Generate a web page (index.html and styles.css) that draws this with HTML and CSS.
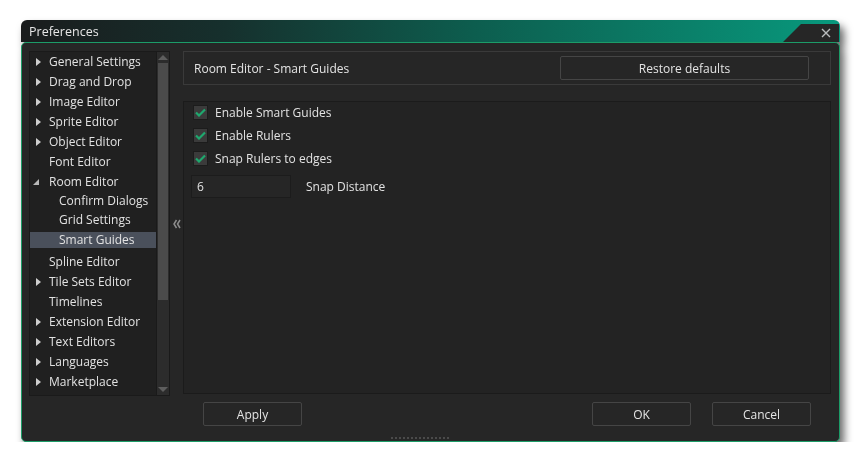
FILE: index.html
```html
<!DOCTYPE html>
<html>
<head>
<meta charset="utf-8">
<link rel="stylesheet" href="styles.css">
</head>
<body>
<div class="window">
  <div class="titlebar">
    <span class="title">Preferences</span>
    <div class="notch"></div>
    <svg class="close" width="10" height="10" viewBox="0 0 10 10"><path d="M1 1 L9 9 M9 1 L1 9" stroke="#b9bcbd" stroke-width="1.4" fill="none"/></svg>
  </div>
  <div class="frame">
    <div class="main">
      <div class="tree">
        <ul class="items">
          <li class="item"><span class="arr"></span>General Settings</li>
          <li class="item"><span class="arr"></span>Drag and Drop</li>
          <li class="item"><span class="arr"></span>Image Editor</li>
          <li class="item"><span class="arr"></span>Sprite Editor</li>
          <li class="item"><span class="arr"></span>Object Editor</li>
          <li class="item">Font Editor</li>
          <li class="item"><span class="arr open"></span>Room Editor</li>
          <li class="item child short">Confirm Dialogs</li>
          <li class="item child">Grid Settings</li>
          <li class="item child sel">Smart Guides</li>
          <li class="item tall">Spline Editor</li>
          <li class="item"><span class="arr"></span>Tile Sets Editor</li>
          <li class="item">Timelines</li>
          <li class="item"><span class="arr"></span>Extension Editor</li>
          <li class="item"><span class="arr"></span>Text Editors</li>
          <li class="item"><span class="arr"></span>Languages</li>
          <li class="item"><span class="arr"></span>Marketplace</li>
        </ul>
        <div class="scroll">
          <div class="sbtn up"></div>
          <div class="track"><div class="thumb"></div></div>
          <div class="sbtn down"></div>
        </div>
      </div>
      <div class="splitter"><svg width="8" height="10" viewBox="0 0 8 10"><path d="M3.5 1 L1 5 L3.5 9 M7 1 L4.5 5 L7 9" stroke="#8c8c8c" stroke-width="1.5" fill="none"/></svg></div>
      <div class="right">
        <div class="header">
          <span class="htitle">Room Editor - Smart Guides</span>
          <button class="btn restore">Restore defaults</button>
        </div>
        <div class="panel">
          <label class="check"><span class="box"><svg width="11" height="9" viewBox="0 0 11 9"><path d="M1 4.5 L4 7.5 L10 1.5" stroke="#1fa86e" stroke-width="2.2" fill="none"/></svg></span>Enable Smart Guides</label>
          <label class="check"><span class="box"><svg width="11" height="9" viewBox="0 0 11 9"><path d="M1 4.5 L4 7.5 L10 1.5" stroke="#1fa86e" stroke-width="2.2" fill="none"/></svg></span>Enable Rulers</label>
          <label class="check"><span class="box"><svg width="11" height="9" viewBox="0 0 11 9"><path d="M1 4.5 L4 7.5 L10 1.5" stroke="#1fa86e" stroke-width="2.2" fill="none"/></svg></span>Snap Rulers to edges</label>
          <div class="field"><span class="input">6</span><span class="flabel">Snap Distance</span></div>
        </div>
      </div>
    </div>
    <div class="bottom">
      <button class="btn">Apply</button>
      <div class="spacer"></div>
      <button class="btn">OK</button>
      <button class="btn">Cancel</button>
    </div>
    <div class="grip"></div>
  </div>
</div>
</body>
</html>
```
FILE: styles.css
```css
*, *::before, *::after { box-sizing: border-box; }
html, body { margin: 0; padding: 0; background: #ffffff; }
body { font-family: "Open Sans", "DejaVu Sans", sans-serif; font-size: 12px; color: #e2e2e2; }
.window { width: 819px; margin: 20px 0 0 21px; filter: drop-shadow(4px 6px 4px rgba(0,0,0,0.6)); }
.titlebar { position: relative; height: 22px; border-radius: 6px 6px 0 0; background: linear-gradient(90deg, #1a1c1d 0%, #16302d 25%, #0d5d4e 55%, #08997d 100%); display: flex; align-items: center; }
.title { padding-left: 8px; font-size: 12.5px; color: #e6e6e6; }
.notch { position: absolute; right: 1px; top: 4px; width: 56px; height: 18px; background: #262626; clip-path: polygon(18px 0, 100% 0, 100% 100%, 0 100%); }
.close { position: absolute; right: 9px; top: 8px; }
.frame { position: relative; height: 400px; border: 1px solid #1c9c68; border-radius: 5px; background: #262626; padding: 8px 8px 0 7px; display: flex; flex-direction: column; }
.main { display: flex; height: 345px; }
.tree { width: 141px; border: 1px solid #1a1a1a; background: #202020; display: flex; }
.items { list-style: none; margin: 0; padding: 0; flex: 1; }
.item { height: 20px; line-height: 20px; padding-left: 19px; position: relative; white-space: nowrap; }
.arr { position: absolute; left: 6px; top: 6px; width: 0; height: 0; border-left: 5px solid #d0d0d0; border-top: 4px solid transparent; border-bottom: 4px solid transparent; }
.arr.open { left: 3px; top: 7px; border: none; border-right: 6px solid #b8b8b8; border-top: 6px solid transparent; }
.child { padding-left: 29px; }
.short { height: 18px; line-height: 18px; }
.sel { background: #4a505b; height: 16px; line-height: 16px; margin: 2px 0; }
.tall { height: 22px; line-height: 23px; }
.scroll { width: 13px; border-left: 1px solid #1a1a1a; background: #2c2c2c; display: flex; flex-direction: column; }
.sbtn { height: 11px; position: relative; }
.sbtn.up::after { content: ""; position: absolute; left: 1px; top: 3px; border-left: 5px solid transparent; border-right: 5px solid transparent; border-bottom: 5px solid #5e5e5e; }
.sbtn.down::after { content: ""; position: absolute; left: 1px; top: 3px; border-left: 5px solid transparent; border-right: 5px solid transparent; border-top: 5px solid #5e5e5e; }
.track { flex: 1; padding: 0 1px; }
.thumb { height: 237px; background: #4b4b4b; }
.splitter { width: 13px; display: flex; align-items: center; justify-content: center; }
.splitter svg { margin-top: 0; }
.right { flex: 1; display: flex; flex-direction: column; }
.header { height: 34px; border: 1px solid #3a3a3a; display: flex; align-items: center; padding: 0 21px 0 10px; }
.htitle { flex: 1; color: #e4e4e4; }
.btn { height: 24px; border: 1px solid #454545; border-radius: 2px; background: #262626; color: #e4e4e4; font-family: "Open Sans", "DejaVu Sans", sans-serif; font-size: 12px; padding: 0; }
.restore { width: 249px; }
.panel { margin-top: 16px; height: 293px; border: 1px solid #1b1b1b; background: #232323; padding: 3px 0 0 9px; }
.check { display: flex; align-items: flex-start; height: 23px; line-height: 15px; }
.box { width: 15px; height: 15px; border: 1px solid #1c1c1c; background: #3b3b3b; margin-right: 7px; display: flex; align-items: center; justify-content: center; }
.field { display: flex; align-items: center; margin-top: 1px; margin-left: -2px; }
.input { width: 100px; height: 23px; line-height: 21px; border: 1px solid #1c1c1c; background: #262626; padding-left: 5px; }
.flabel { margin-left: 15px; }
.bottom { display: flex; height: 24px; margin-top: 6px; padding: 0 20px 0 174px; gap: 21px; }
.bottom .btn { width: 99px; }
.spacer { flex: 1; }
.grip { position: absolute; left: 369px; bottom: 2px; width: 60px; height: 2px; background: repeating-linear-gradient(90deg, #4a4a4a 0 2px, transparent 2px 4px); }
```
